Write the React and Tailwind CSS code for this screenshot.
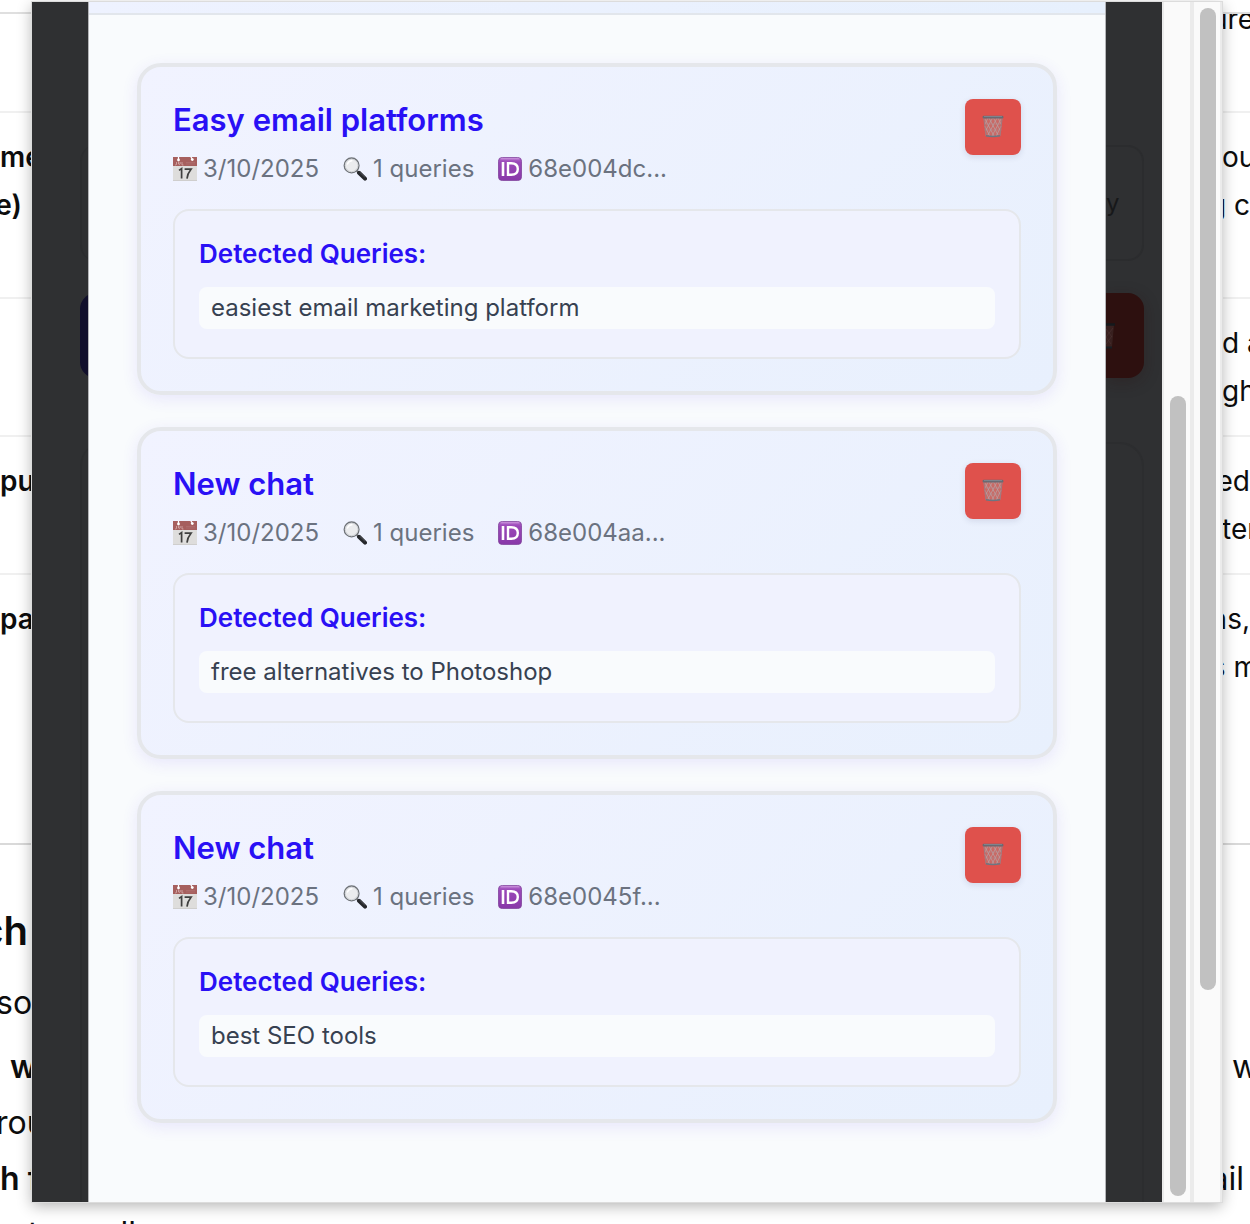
import React from 'react';

const chats = [
    { title: 'Easy email platforms', date: '3/10/2025', id: '68e004dc...', queries: ['easiest email marketing platform'] },
    { title: 'New chat', date: '3/10/2025', id: '68e004aa...', queries: ['free alternatives to Photoshop'] },
    { title: 'New chat', date: '3/10/2025', id: '68e0045f...', queries: ['best SEO tools'] },
];

const CalendarIcon = () => (
    <svg viewBox="0 0 24 24" className="size-6 shrink-0" aria-hidden="true">
        <rect width="24" height="24" fill="#dedddc" />
        <rect width="24" height="9" fill="#a65f5e" />
        <path d="M5.5 0v3M18 0l1.5 2.5" stroke="#fff" strokeWidth="1.2" strokeLinecap="round" />
        <circle cx="5.5" cy="3" r="1.4" fill="#fff" />
        <circle cx="19.3" cy="2.6" r="1.4" fill="#fff" />
        <path d="M3.5 5v2.5q-.8 1-1.5 0M5.5 5v2q.8 1.2 1.6 0V5M9 5v3h1.5" stroke="#dcb9b8" strokeWidth=".7" fill="none" />
        <path d="M13 5.5h9M13 7h9" stroke="#b27473" strokeWidth=".6" />
        <path d="M6 13.4l2.6-1.8V21.6M11.6 12.2h6.4q-3.6 4.4-4 9.4" stroke="#3f3f3f" strokeWidth="1.7" fill="none" />
        <path d="M0 23.5h24" stroke="#cfcecd" />
    </svg>
);

const SearchIcon = () => (
    <svg viewBox="0 0 24 24" className="size-6 shrink-0" aria-hidden="true">
        <path d="M13.5 13.5l3 3" stroke="#777" strokeWidth="2" />
        <path d="M16 15.8l6 5.8" stroke="#25272b" strokeWidth="4" strokeLinecap="round" />
        <path d="M17 15.5l4.6 4.4" stroke="#5d6065" strokeWidth=".8" strokeLinecap="round" />
        <circle cx="8.6" cy="8.4" r="7.4" fill="#ebecee" stroke="#6f7378" strokeWidth="1.3" />
        <circle cx="8.6" cy="8.4" r="6.3" fill="none" stroke="#c9cbcf" strokeWidth=".8" />
        <path d="M4.5 7q1.2-3 4.4-3.2" stroke="#fff" strokeWidth="1.4" fill="none" strokeLinecap="round" />
    </svg>
);

const IdIcon = () => (
    <svg viewBox="0 0 24 24" className="size-6 shrink-0" aria-hidden="true">
        <defs>
            <linearGradient id="idFill" x1="0" y1="0" x2="0" y2="1">
                <stop offset="0" stopColor="#b871cf" />
                <stop offset="0.2" stopColor="#9a48b8" />
                <stop offset="1" stopColor="#8838a8" />
            </linearGradient>
        </defs>
        <rect x=".4" y=".4" width="23.2" height="23.2" rx="4" fill="url(#idFill)" stroke="#7c3f98" strokeWidth=".8" />
        <path d="M3 1.8h18" stroke="#d3a3e2" strokeWidth=".8" strokeLinecap="round" />
        <path d="M5 5v14" stroke="#fff" strokeWidth="2.6" />
        <path d="M10 6.2h3.2c4 0 6.6 2.1 6.6 5.8s-2.6 5.8-6.6 5.8H10z" stroke="#fff" strokeWidth="2.4" fill="none" />
    </svg>
);

const TrashIcon = () => (
    <svg viewBox="0 0 24 24" className="size-6 shrink-0" aria-hidden="true">
        <path d="M2.5 2h19l-2.3 19q-7.2 1.6-14.4 0z" fill="#c86a66" />
        <path
            d="M4 4l9 17M8 3l9 17M12.5 3l6.5 12M17 3l3 6M3.8 11l5 10M20 4l-9 17M16 3L7 20M11.5 3L5 15M7 3l-3 6M20.2 11l-5 10"
            stroke="#b8a3a6"
            strokeWidth=".7"
            fill="none"
        />
        <path d="M3 9h18M3.5 15h17" stroke="#ad9094" strokeWidth=".5" />
        <path d="M2.8 3L5 21M21.2 3L19 21" stroke="#a07b80" strokeWidth="1" />
        <path d="M5 20.8q7 1.4 14 0" stroke="#6b7682" strokeWidth="1.6" fill="none" />
        <rect x="1.6" y=".8" width="20.8" height="2.6" rx="1.2" fill="#6a6a72" />
        <path d="M3 1.5h18" stroke="#8b949d" strokeWidth=".6" />
    </svg>
);

const ChatCard = ({ chat }) => (
    <article className="rounded-3xl border-4 border-[#e5e7eb] bg-linear-135 from-[#f1f3ff] to-[#e8f0fd] p-8 shadow-[0_4px_16px_rgba(79,50,240,0.1)]">
        <header className="mb-5 flex items-start justify-between">
            <div>
                <h3 className="mb-2 text-[31px] leading-[42px] font-semibold text-[#2910f5]">{chat.title}</h3>
                <div className="flex gap-6 text-2xl leading-10 text-[#6b7280]">
                    <span className="flex items-center gap-1.5"><CalendarIcon />{chat.date}</span>
                    <span className="flex items-center gap-1.5"><SearchIcon />{chat.queries.length} queries</span>
                    <span className="flex items-center gap-1.5"><IdIcon />{chat.id}</span>
                </div>
            </div>
            <button type="button" aria-label="Delete chat" className="flex size-14 items-center justify-center rounded-lg bg-[#df514c] shadow-[0_2px_6px_rgba(30,40,80,0.12)]">
                <TrashIcon />
            </button>
        </header>
        <section className="rounded-2xl border-2 border-[#e5e7eb] bg-[#f0f2fe] p-6">
            <h4 className="mb-3.5 text-[26px] leading-[38px] font-semibold text-[#2910f5]">Detected Queries:</h4>
            <ul>
                {chat.queries.map((query) => (
                    <li key={query} className="mb-1 rounded-lg bg-[#f9fbfd] px-3 text-2xl leading-[42px] text-[#374151]">{query}</li>
                ))}
            </ul>
        </section>
    </article>
);

// Narrow slice of the article that stays visible beside the popup
const PageLeft = () => (
    <div className="flex w-8 shrink-0 flex-col overflow-hidden text-[28px] leading-[48px] font-semibold whitespace-nowrap">
        <div className="h-3.5 shrink-0 border-b-2 border-[#dfdfdf]" />
        <div className="h-[99px] shrink-0 border-b-2 border-[#f0f0f0]" />
        <div className="h-[186px] shrink-0 border-b-2 border-[#f0f0f0] py-5">
            <p>me</p>
            <p className="flex justify-end pr-2.5">e)</p>
        </div>
        <div className="h-[138px] shrink-0 border-b-2 border-[#f0f0f0]" />
        <div className="h-[138px] shrink-0 border-b-2 border-[#f0f0f0] py-5">pu</div>
        <div className="h-[270px] shrink-0 border-b-2 border-[#d9d9d9] py-5">pa</div>
        <h2 className="mt-[58px] flex shrink-0 justify-end pr-1 text-[40px] leading-[56px]">ch</h2>
        <div className="mt-4 text-[32px] leading-[56px]">
            <p className="-ml-1 mb-2 font-normal">son</p>
            <p className="pl-2.5">w</p>
            <p className="-ml-1 font-normal">rou</p>
            <p>h f</p>
        </div>
    </div>
);

const PageRight = () => (
    <div className="flex w-7 shrink-0 flex-col overflow-hidden text-[28px] leading-[48px] whitespace-nowrap">
        <div className="h-3.5 shrink-0 border-b-2 border-[#dfdfdf]" />
        <div className="flex h-[99px] shrink-0 flex-col justify-end overflow-hidden border-b-2 border-[#f0f0f0] pb-[68px]">
            <p className="-mr-1 flex justify-end">ure</p>
        </div>
        <div className="h-[186px] shrink-0 border-b-2 border-[#f0f0f0] py-5">
            <p>ou</p>
            <p className="flex justify-end">g c</p>
        </div>
        <div className="h-[138px] shrink-0 border-b-2 border-[#f0f0f0] py-5">
            <p>d a</p>
            <p>gh</p>
        </div>
        <div className="h-[138px] shrink-0 border-b-2 border-[#f0f0f0] py-5">
            <p className="flex justify-end">red</p>
            <p>ter</p>
        </div>
        <div className="h-[270px] shrink-0 border-b-2 border-[#d9d9d9] py-5">
            <p className="flex justify-end">ns,</p>
            <p className="-mr-2 flex justify-end">s m</p>
        </div>
        <div className="mt-[194px] text-[32px] leading-[56px]">
            <p className="mb-14 pl-2.5">w</p>
            <p className="flex justify-end pr-1.5">ail</p>
        </div>
    </div>
);

// Backdrop gutters with the dimmed panel showing through
const GutterLeft = () => (
    <div className="flex w-14 shrink-0 flex-col overflow-hidden pl-12">
        <div className="mt-[143px] h-[116px] w-10 shrink-0 rounded-l-2xl border-l-2 border-[#2c2d2f]" />
        <div className="mt-8 h-[85px] w-10 shrink-0 rounded-l-2xl bg-[#110f2b]" />
        <div className="mt-16 w-10 flex-1 rounded-tl-3xl border-l-2 border-[#2c2d2f]" />
    </div>
);

const GutterRight = () => (
    <div className="flex w-14 shrink-0 flex-col overflow-hidden">
        <div className="mt-[143px] flex h-[116px] w-[38px] shrink-0 items-center rounded-r-2xl border-y-2 border-r-2 border-[#2b2c2e] text-2xl text-[#17181a]">y</div>
        <div className="mt-8 flex h-[85px] w-[38px] shrink-0 items-center overflow-hidden rounded-r-2xl bg-[#2d100f] shadow-[0_4px_16px_rgba(40,16,15,0.3)]">
            <svg viewBox="0 0 9 26" className="h-[26px] w-[9px]" aria-hidden="true">
                <path d="M0 2h8l-2 22H0z" fill="#38201f" />
                <path d="M0 6l6 8M0 14l5 7M7 5L0 14M6 13L0 21" stroke="#4a3130" strokeWidth=".7" />
                <path d="M0 1.5h9" stroke="#15191d" strokeWidth="2.5" />
                <path d="M0 24.5h6" stroke="#171d22" strokeWidth="2" />
            </svg>
        </div>
        <div className="mt-16 w-[38px] flex-1 rounded-tr-3xl border-t-2 border-r-2 border-[#2c2d2f]" />
    </div>
);

const App = () => {
    return (
        <div className="flex h-screen flex-col overflow-hidden bg-white font-['Inter',sans-serif] text-[#0d0d0d]">
            <div className="flex min-h-0 flex-1">
                <PageLeft />
                <div className="z-10 mt-0.5 flex min-w-0 flex-1 bg-[#2f3032] shadow-[0_0_0_1px_#dcdcdc,0_4px_14px_rgba(0,0,0,0.3)]">
                    <GutterLeft />
                    <main className="min-w-0 flex-1 overflow-hidden border-x border-[#b4b5b8] bg-[#f9fbfd]">
                        <div className="h-[13px] border-b-2 border-[#e2e6ec] bg-linear-to-r from-[#eef2ff] to-[#e7f0fd]" />
                        <div className="flex flex-col gap-8 p-12">
                            {chats.map((chat) => (
                                <ChatCard key={chat.id} chat={chat} />
                            ))}
                        </div>
                    </main>
                    <GutterRight />
                    <div className="flex w-[30px] shrink-0 flex-col border-x-2 border-[#ebebeb] bg-[#fafafa] px-1.5 pt-[394px] pb-1.5">
                        <div className="w-4 flex-1 rounded-full bg-[#c1c1c1]" />
                    </div>
                    <div className="flex w-[30px] shrink-0 flex-col border-x-2 border-[#ebebeb] bg-[#fafafa] px-1.5 pt-1.5 pb-[212px]">
                        <div className="w-4 flex-1 rounded-full bg-[#c1c1c1]" />
                    </div>
                </div>
                <PageRight />
            </div>
            <div className="flex h-[22px] shrink-0 gap-16 overflow-hidden pt-1 pl-7 text-[32px] leading-[56px]">
                <span>t</span>
                <span>all</span>
            </div>
        </div>
    );
};

export default App;
